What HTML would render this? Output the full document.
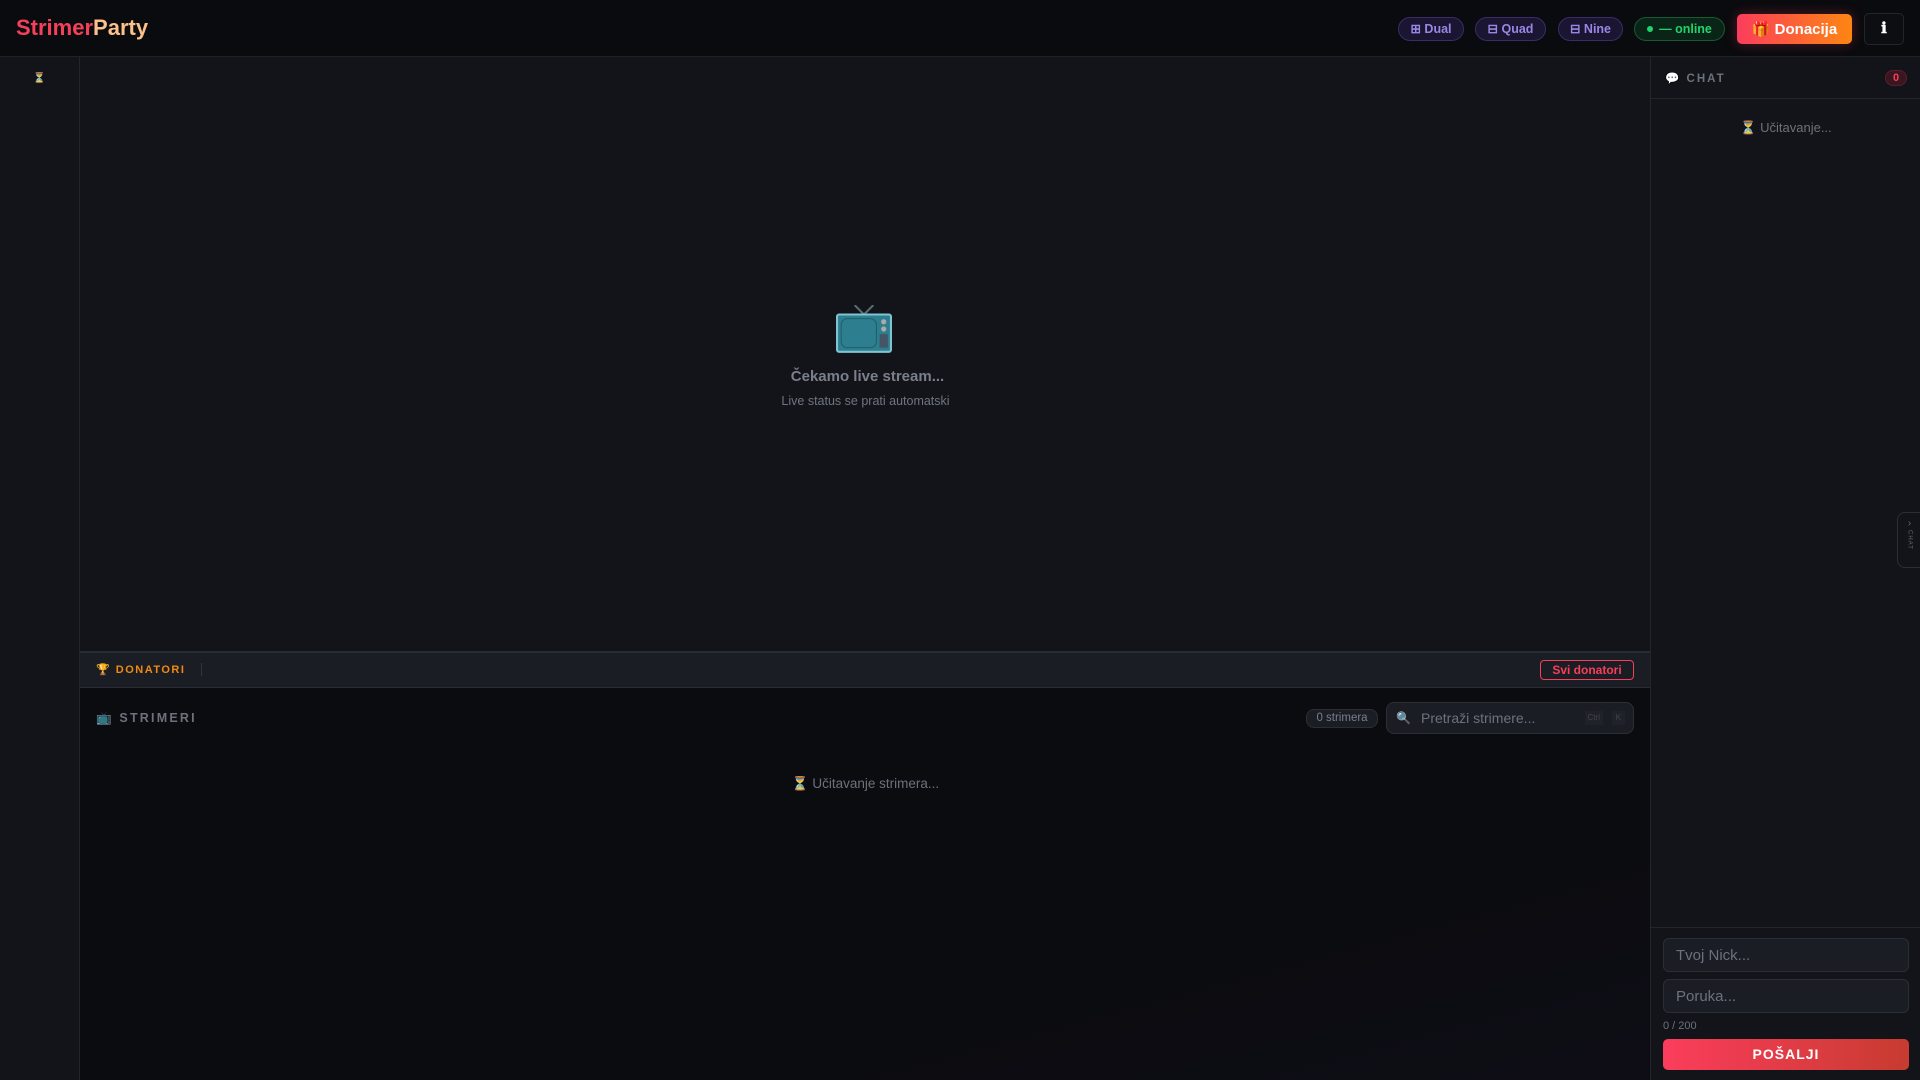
<!DOCTYPE html>
<html><head><meta charset="utf-8"><style>
*{box-sizing:border-box;margin:0;padding:0}
body{width:1920px;height:1080px;background:#131419;font-family:"Liberation Sans",sans-serif;overflow:hidden;position:relative;color:#8a8f9c}
.hdr{position:absolute;left:0;top:0;width:1920px;height:57px;background:#0a0b0e;border-bottom:1px solid #1f2128}
.logo{position:absolute;left:16px;top:15px;font-size:22px;font-weight:bold}
.pill{position:absolute;top:17px;height:24px;border-radius:12px;font-size:12.5px;font-weight:bold;line-height:22px;text-align:center}
.lay{background:#1a1530;border:1px solid #3a2c66;color:#9a86e6}
.side{position:absolute;left:0;top:57px;width:80px;height:1023px;background:#131419;border-right:1px solid #23252d}
.main{position:absolute;left:80px;top:57px;width:1571px;height:595px;background:#131419}
.don{position:absolute;left:80px;top:651px;width:1571px;height:37px;background:#1b1d24;border-top:2px solid #2a2c34;border-bottom:1px solid #2a2c34}
.str{position:absolute;left:80px;top:688px;width:1571px;height:392px;background:linear-gradient(165deg,#0b0c10 70%,#0e0d16)}
.chat{position:absolute;left:1650px;top:57px;width:270px;height:1023px;background:#131419;border-left:1px solid #23252d}
.inp{position:absolute;left:12px;width:246px;height:34px;background:#1b1d24;border:1px solid #2c2e36;border-radius:6px;color:#6d717c;font-size:15px;padding:8px 12px}
</style></head><body>
<div class="hdr">
<div class="logo"><span style="color:#f4405a">Strimer</span><span style="color:#fcc08a">Party</span></div>
<div class="pill lay" style="left:1398px;width:66px">⊞ Dual</div>
<div class="pill lay" style="left:1475px;width:71px">⊟ Quad</div>
<div class="pill lay" style="left:1558px;width:65px">⊟ Nine</div>
<div class="pill" style="left:1634px;width:91px;background:#0b2418;border:1px solid #175a33;color:#22d36a"><span style="display:inline-block;width:6px;height:6px;border-radius:3px;background:#22d36a;vertical-align:middle;margin-right:6px;margin-top:-2px"></span>— online</div>
<div style="position:absolute;left:1737px;top:14px;width:115px;height:30px;border-radius:5px;background:linear-gradient(90deg,#fb3d5c,#fd8612);color:#fff;font-weight:bold;font-size:15px;line-height:31px;text-align:center;box-shadow:0 0 12px rgba(251,61,92,.3)">🎁 Donacija</div>
<div style="position:absolute;left:1864px;top:13px;width:40px;height:32px;border-radius:5px;border:1px solid #23252d;background:#0d0e12;color:#fff;font-weight:bold;font-size:15px;line-height:30px;text-align:center">ℹ</div>
</div>
<div class="side"><div style="text-align:center;margin-top:16px;font-size:10px;color:#c89a40">⏳</div></div>
<div class="main">
<svg style="position:absolute;left:756px;top:248px" width="56" height="48" viewBox="0 0 54 46"><path d="M18 0l9 9 9-9" stroke="#5a6b73" stroke-width="2" fill="none"/><rect x="1" y="9" width="52" height="36" rx="2" fill="#2d7f90" stroke="#7fc4d0" stroke-width="2"/><rect x="5" y="13" width="34" height="28" rx="6" fill="#2d7f90" stroke="#1f5e6a"/><circle cx="46" cy="16" r="2.5" fill="#aaa"/><circle cx="46" cy="23" r="2.5" fill="#aaa"/><rect x="42" y="28" width="8" height="13" fill="#456"/></svg>
<div style="position:absolute;left:2px;width:1571px;top:311px;text-align:center;font-size:15px;font-weight:bold;color:#7a7f8c">Čekamo live stream...</div>
<div style="position:absolute;left:0;width:1571px;top:337px;text-align:center;font-size:12.5px;color:#6f7480">Live status se prati automatski</div>
</div>
<div class="don">
<div style="position:absolute;left:16px;top:10px;font-size:11px;font-weight:bold;letter-spacing:1.5px;color:#f08a12">🏆 DONATORI</div>
<div style="position:absolute;left:121px;top:10px;width:1px;height:13px;background:#33353d"></div>
<div style="position:absolute;left:1460px;top:7px;width:94px;height:20px;border:1px solid #f4405a;border-radius:4px;color:#f4405a;font-size:12px;font-weight:bold;text-align:center;line-height:18px">Svi donatori</div>
</div>
<div class="str">
<div style="position:absolute;left:16px;top:23px;font-size:12.5px;font-weight:bold;letter-spacing:2.2px;color:#6d717c">📺 STRIMERI</div>
<div style="position:absolute;left:1226px;top:21px;width:72px;height:19px;border-radius:8px;background:#1b1d24;border:1px solid #2c2e36;font-size:11.5px;text-align:center;line-height:17px;color:#7a7f8c">0 strimera</div>
<div style="position:absolute;left:1306px;top:14px;width:248px;height:32px;border-radius:8px;background:#1b1d24;border:1px solid #2c2e36;font-size:14px;color:#6d717c;line-height:30px;padding-left:34px">Pretraži strimere...<span style="position:absolute;left:9px;top:0;font-size:12px">🔍</span><span style="position:absolute;right:30px;top:8px;font-size:8px;background:#20222a;padding:1px 3px;line-height:12px;color:#444">Ctrl</span><span style="position:absolute;right:8px;top:8px;font-size:8px;background:#20222a;padding:1px 4px;line-height:12px;color:#444">K</span></div>
<div style="position:absolute;left:0;width:1571px;top:88px;text-align:center;font-size:13.5px;color:#6d717c">⏳ Učitavanje strimera...</div>
</div>
<div class="chat">
<div style="position:absolute;left:0;top:0;width:270px;height:42px;border-bottom:1px solid #23252d">
<div style="position:absolute;left:14px;top:14px;font-size:11.5px;font-weight:bold;letter-spacing:2px;color:#6d717c">💬 CHAT</div>
<div style="position:absolute;left:234px;top:13px;width:22px;height:16px;border-radius:8px;background:#3a1620;border:1px solid #5a1f2c;color:#f4405a;font-size:11px;text-align:center;line-height:14px;font-weight:bold">0</div>
</div>
<div style="position:absolute;left:0;width:270px;top:63px;text-align:center;font-size:13px;color:#6d717c">⏳ Učitavanje...</div>
<div style="position:absolute;left:246px;top:455px;width:24px;height:56px;border:1px solid #2c2e36;border-right:none;border-radius:8px 0 0 8px;color:#666;font-size:10px;text-align:center;padding-top:5px">›<div style="font-size:6px;letter-spacing:1px;writing-mode:vertical-rl;margin:1px auto 0">CHAT</div></div>
<div style="position:absolute;left:0;top:870px;width:270px;height:1px;background:#23252d"></div>
<div class="inp" style="top:881px">Tvoj Nick...</div>
<div class="inp" style="top:922px">Poruka...</div>
<div style="position:absolute;left:12px;top:963px;font-size:11px;color:#6d717c">0 / 200</div>
<div style="position:absolute;left:12px;top:982px;width:246px;height:31px;border-radius:5px;background:linear-gradient(90deg,#fb3d5c,#c73b30);color:#fff;font-weight:bold;font-size:14px;letter-spacing:1px;text-align:center;line-height:31px">POŠALJI</div>
</div>
</body></html>
